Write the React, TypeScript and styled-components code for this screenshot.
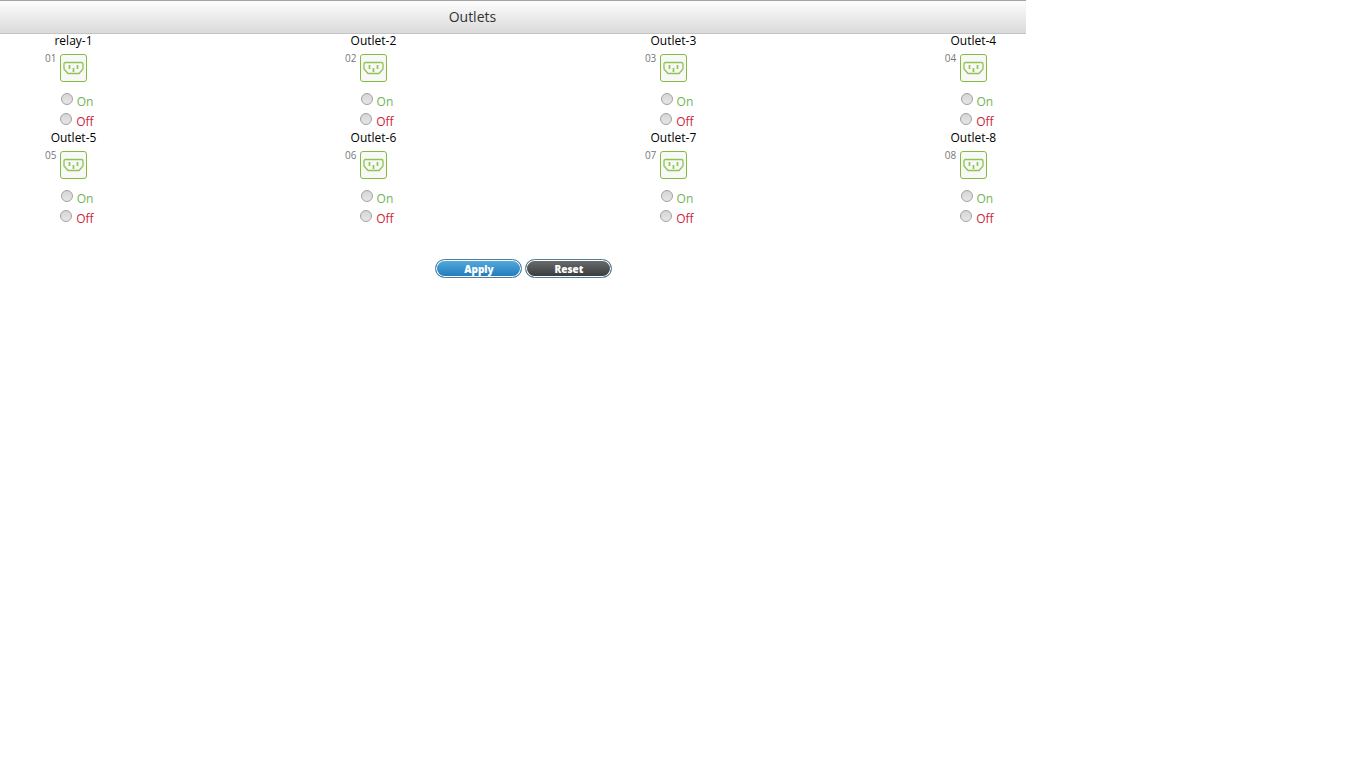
import React from "react";
import styled, { createGlobalStyle } from "styled-components";

const GlobalStyle = createGlobalStyle`
  body {
    margin: 0;
    background: #fff;
    color: #000;
    font: 12px/14px "Open Sans", "Noto Sans", sans-serif;
  }
`;

const Page = styled.form`
  width: 75.1%;
`;

const Header = styled.header`
  box-sizing: border-box;
  height: 34px;
  padding-right: 81px;
  border-top: 1px solid #a3a3a3;
  border-bottom: 1px solid #c4c4c4;
  background: linear-gradient(#fdfdfd, #dadada);
`;

const Title = styled.h1`
  margin: 0;
  color: #333;
  font-size: 14px;
  font-weight: 400;
  line-height: 32px;
  text-align: center;
`;

const OutletRow = styled.div`
  display: flex;
  justify-content: space-between;
  padding: 0 24px 0 45px;
`;

const OutletCell = styled.fieldset`
  width: 57px;
  min-width: 0;
  margin: 0;
  padding: 0;
  border: 0;
`;

const OutletName = styled.legend`
  width: 100%;
  padding: 0;
  text-align: center;
  white-space: nowrap;
`;

const Socket = styled.div`
  display: flex;
  gap: 3px;
  margin: 6px 0 9px;
`;

const OutletNumber = styled.span`
  width: 12px;
  color: #777;
  font-size: 10px;
  line-height: 8px;
`;

const Choice = styled.label<{ $color: string }>`
  display: flex;
  justify-content: center;
  align-items: flex-start;
  gap: 4px;
  height: 20px;
  padding-left: 7px;
  color: ${(p) => p.$color};
  line-height: 22px;
`;

const Radio = styled.input`
  appearance: none;
  box-sizing: border-box;
  flex: none;
  width: 12px;
  height: 12px;
  margin: 2px 0 0;
  border: 1px solid #a2a2a2;
  border-radius: 50%;
  background: linear-gradient(#d6d6d6, #e6e6e6);

  &:checked {
    background: radial-gradient(#444 0 2px, #e0e0e0 3px);
  }
`;

const Actions = styled.div`
  display: flex;
  justify-content: center;
  gap: 3px;
  margin-top: 31px;
  padding-left: 21px;
`;

const Button = styled.button<{ $from: string; $to: string }>`
  box-sizing: border-box;
  width: 87px;
  height: 19px;
  padding: 2px 0 0 1px;
  border: 1px solid #4c7c99;
  border-radius: 10px;
  background: linear-gradient(${(p) => p.$from}, ${(p) => p.$to});
  box-shadow: inset 0 0 0 1px #fff;
  color: #fff;
  font: 800 10px/15px "Open Sans", "Noto Sans", sans-serif;
`;

function SocketIcon() {
  return (
    <svg width="27" height="28" viewBox="0 0 27 28" fill="none" aria-hidden="true">
      <rect x=".5" y=".5" width="26" height="27" rx="2.5" fill="#f8f8f8" stroke="#84bd3c" />
      <path
        d="M5.5 8.5h16q1.500 0 1.500 1.500v5l-4 4.500h-11l-4-4.500v-5q0-1.500 1.500-1.500z"
        stroke="#8fc550"
        strokeWidth="1.3"
      />
      <path d="M9.500 11v4M13.500 14v4M17.500 11v4" stroke="#8fc550" strokeWidth="1.7" />
    </svg>
  );
}

const names = [
  ["relay-1", "Outlet-2", "Outlet-3", "Outlet-4"],
  ["Outlet-5", "Outlet-6", "Outlet-7", "Outlet-8"],
];

function Outlet({ name, number }: { name: string; number: number }) {
  const group = `outlet-${number}`;
  return (
    <OutletCell>
      <OutletName>{name}</OutletName>
      <Socket>
        <OutletNumber>{String(number).padStart(2, "0")}</OutletNumber>
        <SocketIcon />
      </Socket>
      <Choice $color="#6fb556">
        <Radio type="radio" name={group} value="on" />
        On
      </Choice>
      <Choice $color="#cc1f3d">
        <Radio type="radio" name={group} value="off" />
        Off
      </Choice>
    </OutletCell>
  );
}

export default function App() {
  return (
    <>
      <GlobalStyle />
      <Page onSubmit={(e: React.FormEvent) => e.preventDefault()}>
        <Header>
          <Title>Outlets</Title>
        </Header>
        {names.map((row, r) => (
          <OutletRow key={r}>
            {row.map((name, c) => (
              <Outlet key={name} name={name} number={r * 4 + c + 1} />
            ))}
          </OutletRow>
        ))}
        <Actions>
          <Button type="submit" $from="#55acdf" $to="#2079bb">Apply</Button>
          <Button type="reset" $from="#6c6d6f" $to="#38393b">Reset</Button>
        </Actions>
      </Page>
    </>
  );
}
